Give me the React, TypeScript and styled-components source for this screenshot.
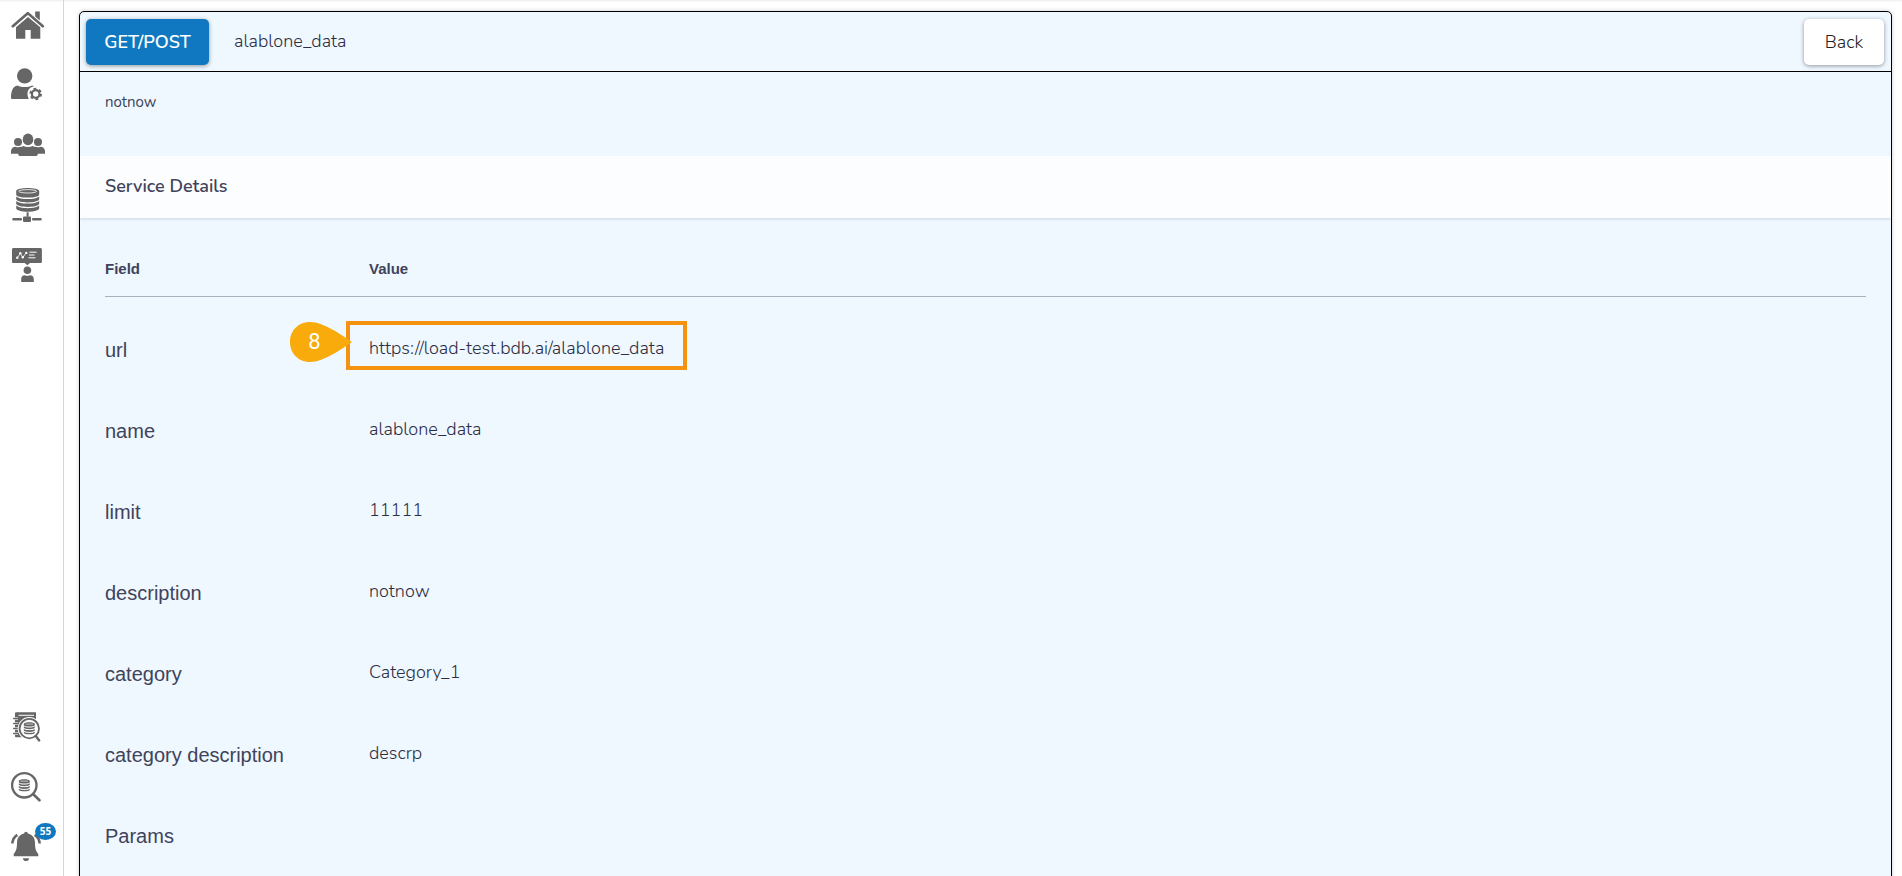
import React from "react";
import styled, { createGlobalStyle } from "styled-components";

const ink = "#40435a";
const valueInk = "#2c2e42";
const grey = "#666666";
const blue = "#0f78c1";
const uiFont = `Nunito, Lato, "Open Sans", sans-serif`;
const plainFont = `"Liberation Sans", Arial, sans-serif`;

const GlobalStyle = createGlobalStyle`
  *, *::before, *::after { box-sizing: border-box; }
  body {
    margin: 0;
    background: #fff;
    color: ${ink};
    font-family: ${uiFont};
  }
`;

const Shell = styled.div`
  display: flex;
  height: 100vh;
  overflow: hidden;
  box-shadow: inset 0 2px 2px -1px rgba(0, 0, 0, 0.08);
`;

const Sidebar = styled.nav`
  flex: none;
  display: flex;
  flex-direction: column;
  justify-content: space-between;
  width: 64px;
  padding: 7px 0 11px 10px;
  border-right: 1px solid #d6d6d6;
`;

const NavGroup = styled.div`
  display: flex;
  flex-direction: column;
  gap: 24px;
`;

const NavButton = styled.button`
  position: relative;
  width: 36px;
  height: 36px;
  padding: 0;
  border: 0;
  background: none;
  color: ${grey};
  cursor: pointer;

  svg {
    display: block;
    width: 36px;
    height: 36px;
  }
`;

const CountBadge = styled.span`
  position: absolute;
  top: -6px;
  right: -10px;
  width: 21px;
  height: 17px;
  border-radius: 50%;
  background: ${blue};
  color: #fff;
  font: 700 10px/17px "Open Sans", sans-serif;
  text-align: center;
`;

const Content = styled.main`
  flex: 1;
  min-width: 0;
  padding: 11px 10px 15px 15px;
  overflow-y: auto;
  scrollbar-width: none;
`;

const Panel = styled.section`
  border: 1px solid #000;
  border-radius: 5px;
  background: #eff7ff;
  box-shadow: 0 0 4px rgba(0, 0, 0, 0.2);
`;

const PanelHeader = styled.header`
  display: flex;
  align-items: center;
  height: 60px;
  padding: 0 7px 0 6px;
  border-bottom: 1px solid #000;
`;

const Button = styled.button<{ $primary?: boolean }>`
  height: 46px;
  padding: 0;
  width: ${(p) => (p.$primary ? 123 : 80)}px;
  border: 0;
  border-radius: 5px;
  background: ${(p) => (p.$primary ? blue : "#fff")};
  color: ${(p) => (p.$primary ? "#fff" : "#222")};
  font-family: ${uiFont};
  font-size: 18px;
  font-weight: ${(p) => (p.$primary ? 600 : 300)};
  box-shadow: 0 1px 4px rgba(0, 0, 0, 0.4);
  cursor: pointer;
`;

const ServiceName = styled.h1`
  flex: 1;
  margin: 0 0 2px 25px;
  color: ${valueInk};
  font-size: 18px;
  font-weight: 300;
  line-height: 24px;
`;

const Summary = styled.p`
  height: 84px;
  margin: 0;
  padding: 20px 25px;
  font-size: 15px;
  line-height: 20px;
`;

const SectionTitle = styled.h2`
  margin: 0;
  padding: 18px 25px 20px;
  background: #fcfdff;
  font-size: 18px;
  font-weight: 600;
  line-height: 24px;
  box-shadow: 0 1px 3px rgba(60, 80, 100, 0.2);
  clip-path: inset(0 0 -4px 0);
`;

const TableArea = styled.div`
  padding: 19px 25px 40px;
`;

const Table = styled.table`
  width: 100%;
  border-collapse: collapse;
  table-layout: fixed;
`;

const HeadCell = styled.th<{ $width?: number }>`
  width: ${(p) => (p.$width ? `${p.$width}px` : "auto")};
  height: 59px;
  padding: 5px 0 0;
  border-bottom: 1px solid #a9b0bd;
  font: 700 15px/20px ${plainFont};
  text-align: left;
`;

const FieldCell = styled.th`
  padding: 41px 0 16px;
  font: 400 20px/24px ${plainFont};
  text-align: left;
  vertical-align: top;
`;

const ValueCell = styled.td`
  padding: 39px 0 18px;
  color: ${valueInk};
  font-size: 18px;
  font-weight: 300;
  line-height: 24px;
  vertical-align: top;
`;

const Highlighted = styled.span`
  position: relative;
  display: inline-block;
`;

const HighlightFrame = styled.span`
  position: absolute;
  top: -15px;
  left: -23px;
  width: 341px;
  height: 49px;
  border: 4px solid #f59310;
  pointer-events: none;
`;

const StepMarker = styled.span`
  position: absolute;
  top: -14px;
  left: -79px;
  display: flex;
  width: 62px;
  height: 40px;
  color: #fff;
  font: 400 22px/40px Roboto, sans-serif;

  svg {
    position: absolute;
    inset: 0;
  }
`;

const StepNumber = styled.span`
  position: relative;
  width: 49px;
  text-align: center;
`;

function HomeIcon() {
  return (
    <svg viewBox="0 0 36 36" fill="currentColor" aria-hidden="true">
      <path d="M25.2 4.5h4.600v9l-4.600-4z" />
      <path d="M2.800 19.200 17.800 6.200l15 13" fill="none" stroke="currentColor" strokeWidth="2.800" strokeLinecap="round" strokeLinejoin="round" />
      <path d="M4.500 20.500 18 8.800l13.500 11.700" fill="none" stroke="#fff" strokeWidth="1" />
      <path d="M6 20.300 18 10l12.300 10.300v11.400h-9.600V23h-5.400v8.700H6z" />
    </svg>
  );
}

function UserGearIcon() {
  return (
    <svg viewBox="0 0 36 36" fill="currentColor" aria-hidden="true">
      <circle cx="14.700" cy="8.900" r="7.700" />
      <path d="M7.500 18.500c4 2 10.500 2 14.500 0 .8.200 1.500.5 2 .8-4.200 1-6.500 3.900-6.500 7.700 0 2 .5 3.600 1.500 5H2.300C1.500 32 1 31.600 1 30.700 1 24 3 19 7.500 18.500z" />
      <circle cx="25.700" cy="27" r="3.800" fill="none" stroke="currentColor" strokeWidth="2.200" />
      <circle cx="25.700" cy="27" r="5.300" fill="none" stroke="currentColor" strokeWidth="2" strokeDasharray="2.700 2.850" />
    </svg>
  );
}

function UsersIcon() {
  return (
    <svg viewBox="0 0 36 36" fill="currentColor" aria-hidden="true">
      <circle cx="8" cy="15" r="4" />
      <circle cx="28" cy="15" r="4" />
      <ellipse cx="18" cy="12.400" rx="5.300" ry="5.800" />
      <path d="M1 26.700v-2.500c0-2.600 2-4.500 4.600-4.500 1.600.7 3.400.7 5 .1 1 0 1.800-.3 2.600-.9 3 1.300 6.600 1.300 9.600 0 .8.600 1.700.9 2.600.9 1.600.6 3.400.6 5-.1 2.600 0 4.600 1.900 4.600 4.500v2.500h-7.200c0 1.500-.8 2.300-2.300 2.300H10.500C9 29 8.200 28.200 8.200 26.700z" />
    </svg>
  );
}

function DatabaseIcon() {
  return (
    <svg viewBox="0 0 36 36" fill="currentColor" aria-hidden="true">
      <path d="M6.200 4c0-4 23-4 23 0v3.400c0 4.200-23 4.200-23 0z" />
      <ellipse cx="17.700" cy="4.300" rx="9" ry="1.700" fill="none" stroke="#fff" strokeWidth=".8" />
      <path d="M6.200 9.400c3 3.400 20 3.400 23 0v2.600c0 4.500-23 4.500-23 0zM6.200 14c3 3.400 20 3.400 23 0v2.600c0 4.500-23 4.500-23 0zM6.200 18.600c3 3.400 20 3.400 23 0v2.400c0 5-23 5-23 0z" />
      <path d="M16.600 25.300h2v4.400h-2z" />
      <rect x="2.300" y="31" width="9.700" height="2.400" rx="1" />
      <rect x="22" y="31" width="9.700" height="2.400" rx="1" />
      <rect x="13" y="29.500" width="8" height="5.500" rx="1" />
    </svg>
  );
}

function TrainingIcon() {
  return (
    <svg viewBox="0 0 36 36" fill="currentColor" aria-hidden="true">
      <path d="M3.500 1h26.800c1 0 1.600.6 1.600 1.500v12c0 1-.6 1.500-1.600 1.500H20l-2.600 2.200L14.700 16H3.500c-1 0-1.500-.5-1.500-1.500v-12C2 1.600 2.500 1 3.500 1z" />
      <g stroke="#fff" fill="none">
        <path d="m7.300 10.800 3-4.500 2.500 4 3.500-4.500" strokeWidth=".8" />
        <path d="M19.500 5.200h7.200M19 8h5.500M18.500 10.800h7" strokeWidth="1" />
      </g>
      <g fill="#fff">
        <circle cx="7.300" cy="10.700" r="1.200" />
        <circle cx="10.300" cy="6.300" r="1.200" />
        <circle cx="12.800" cy="10.300" r="1.200" />
        <circle cx="16.300" cy="5.900" r="1.200" />
      </g>
      <circle cx="17.400" cy="23.300" r="3.800" />
      <path d="M11.200 35v-3c0-2.300 1.300-3.700 3.600-3.700 1.700.7 3.500.7 5.200 0 2.300 0 3.800 1.400 3.800 3.700v3z" />
    </svg>
  );
}

function DiscStack({ x, y }: { x: number; y: number }) {
  return (
    <g transform={`translate(${x} ${y})`} fill="currentColor">
      <path d="M0 1.700C0-.5 11-.5 11 1.700v1C11 4.900 0 4.900 0 2.700z" />
      <path d="M1.700 1.900h7.600" stroke="#fff" strokeWidth=".6" />
      <path d="M0 4.100c2 1.600 9 1.600 11 0v1.300c0 2.200-11 2.200-11 0zM0 6.800c2 1.600 9 1.600 11 0v1.300c0 2.200-11 2.200-11 0zM0 9.500c2 1.600 9 1.600 11 0v1c0 2.200-11 2.200-11 0z" />
    </g>
  );
}

function CatalogSearchIcon() {
  return (
    <svg viewBox="0 0 36 36" fill="currentColor" aria-hidden="true">
      <path d="M6.500 3.300H26v25H6.500C5.300 28.300 5 27.700 5 27V4.700c0-.9.500-1.400 1.500-1.400z" />
      <path d="M8.500 6.300h15.500" stroke="#fff" strokeWidth="1" />
      <g stroke="#fff" strokeWidth="2.400">
        <path d="M4 9.500h4M4 14.500h4M4 19.500h4M4 24.500h4" />
      </g>
      <g stroke="currentColor" strokeWidth="1.500" strokeLinecap="round">
        <path d="M3.700 9.500h4M3.700 14.500h4M3.700 19.500h4M3.700 24.500h4" />
      </g>
      <circle cx="19.300" cy="19.600" r="11.600" fill="#fff" />
      <circle cx="19.300" cy="19.600" r="9.700" fill="none" stroke="currentColor" strokeWidth="1.800" />
      <path d="m25.800 27 3.400 4.400" stroke="currentColor" strokeWidth="2.400" strokeLinecap="round" />
      <DiscStack x={13.800} y={13.200} />
    </svg>
  );
}

function DataSearchIcon() {
  return (
    <svg viewBox="0 0 36 36" aria-hidden="true">
      <circle cx="14.300" cy="16.300" r="12.200" fill="none" stroke="currentColor" strokeWidth="2.300" />
      <path d="m23.300 25.300 6.200 6" stroke="currentColor" strokeWidth="2.600" strokeLinecap="round" />
      <DiscStack x={8.800} y={10.200} />
    </svg>
  );
}

function BellIcon() {
  return (
    <svg viewBox="0 0 36 36" fill="currentColor" aria-hidden="true">
      <path d="M14.200 4.600a1.800 1.800 0 0 1 3.600 0c4.800 1 7.200 4.600 7.200 9.400 0 5.500 1 8.500 3.300 11v2.300H3.700V25C6 22.500 7 19.500 7 14c0-4.800 2.400-8.400 7.200-9.400z" />
      <path d="M12.800 29.200h6.400c-.6 3.800-5.800 3.800-6.400 0z" />
      <path d="M2.300 14.500c.2-3.600 2-6.600 5-8.600M29.700 14.500c-.2-3.600-2-6.600-5-8.600" fill="none" stroke="currentColor" strokeWidth="2.600" />
    </svg>
  );
}

const topNav = [
  { label: "Home", Icon: HomeIcon },
  { label: "User settings", Icon: UserGearIcon },
  { label: "Groups", Icon: UsersIcon },
  { label: "Data connectors", Icon: DatabaseIcon },
  { label: "Workspaces", Icon: TrainingIcon },
];

const bottomNav = [
  { label: "Data catalog", Icon: CatalogSearchIcon },
  { label: "Search data", Icon: DataSearchIcon },
  { label: "Notifications", Icon: BellIcon, count: 55 },
];

const details = [
  { field: "url", value: "https://load-test.bdb.ai/alablone_data", step: 8 },
  { field: "name", value: "alablone_data" },
  { field: "limit", value: "11111" },
  { field: "description", value: "notnow" },
  { field: "category", value: "Category_1" },
  { field: "category description", value: "descrp" },
  { field: "Params", value: "" },
];

function Callout({ step, children }: { step: number; children: React.ReactNode }) {
  return (
    <Highlighted>
      {children}
      <HighlightFrame />
      <StepMarker>
        <svg width="62" height="40" viewBox="0 0 62 40" aria-hidden="true">
          <path d="M62 20C53 26 34 40 20 40 8.500 40 0 31.500 0 20S8.500 0 20 0C34 0 53 14 62 20z" fill="#f8ab0a" />
        </svg>
        <StepNumber>{step}</StepNumber>
      </StepMarker>
    </Highlighted>
  );
}

export default function App() {
  return (
    <>
      <GlobalStyle />
      <Shell>
        <Sidebar aria-label="Main">
          <NavGroup>
            {topNav.map(({ label, Icon }) => (
              <NavButton key={label} type="button" aria-label={label}>
                <Icon />
              </NavButton>
            ))}
          </NavGroup>
          <NavGroup>
            {bottomNav.map(({ label, Icon, count }) => (
              <NavButton key={label} type="button" aria-label={label}>
                <Icon />
                {count && <CountBadge>{count}</CountBadge>}
              </NavButton>
            ))}
          </NavGroup>
        </Sidebar>
        <Content>
          <Panel>
            <PanelHeader>
              <Button type="button" $primary>GET/POST</Button>
              <ServiceName>alablone_data</ServiceName>
              <Button type="button">Back</Button>
            </PanelHeader>
            <Summary>notnow</Summary>
            <SectionTitle>Service Details</SectionTitle>
            <TableArea>
              <Table>
                <thead>
                  <tr>
                    <HeadCell scope="col" $width={264}>Field</HeadCell>
                    <HeadCell scope="col">Value</HeadCell>
                  </tr>
                </thead>
                <tbody>
                  {details.map(({ field, value, step }) => (
                    <tr key={field}>
                      <FieldCell scope="row">{field}</FieldCell>
                      <ValueCell>
                        {step ? <Callout step={step}>{value}</Callout> : value}
                      </ValueCell>
                    </tr>
                  ))}
                </tbody>
              </Table>
            </TableArea>
          </Panel>
        </Content>
      </Shell>
    </>
  );
}
